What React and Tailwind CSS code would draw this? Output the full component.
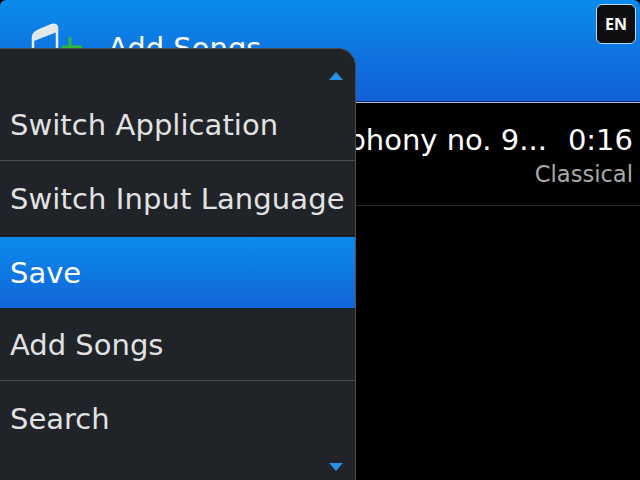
const font = { fontFamily: "'DejaVu Sans', sans-serif" };

const Arrow = ({ down, className }) => (
  <svg width="14" height="8" viewBox="0 0 14 8" className={className}>
    <path d={down ? "M0 0H14L7 8Z" : "M7 0L14 8H0Z"} fill="#2a8fe6" />
  </svg>
);

const Menu = () => (
  <div className="absolute left-0 top-[48px] w-[356px] h-[432px] bg-[#202328] border-t border-r border-[#4a4d52] rounded-tr-[18px] overflow-hidden">
    <div className="h-[39px] flex items-end justify-end pr-[12px] pb-[8px]">
      <Arrow />
    </div>
    <div className="h-[73px] flex items-center pl-[10px] pt-[3px] border-b border-[#4a4d52] text-[#e2e2e2] text-[29px] tracking-[0.06px]">
      Switch Application
    </div>
    <div className="h-[75px] flex items-center pl-[10px] pt-[3px] border-b border-[#14171b] text-[#e2e2e2] text-[29px] tracking-[0.1px] whitespace-nowrap">
      Switch Input Language
    </div>
    <div className="h-[71px] mt-[1px] flex items-center pl-[10px] pt-[3px] text-white text-[29px] bg-gradient-to-b from-[#0a8bec] to-[#1265d8]">
      Save
    </div>
    <div className="h-[73px] flex items-center pl-[10px] pt-[3px] border-b border-[#4a4d52] text-[#e2e2e2] text-[29px]">
      Add Songs
    </div>
    <div className="h-[76px] flex items-center pl-[10px] pt-[1px] text-[#e2e2e2] text-[29px]">
      Search
    </div>
    <Arrow down className="absolute right-[12px] bottom-[9px]" />
  </div>
);

export default function App() {
  return (
    <div className="relative w-[640px] h-[480px] overflow-hidden bg-black" style={font}>
      <header className="h-[102px] rounded-t-[6px] bg-gradient-to-b from-[#0a8bec] to-[#1360d6] border-b border-[#0b2f78] flex items-start relative">
        <div className="pl-[30px] pt-[23px] flex items-start">
          <svg width="54" height="40" viewBox="0 0 54 40">
            <path d="M3 40V15Q3 10 8 8L22 2Q27 1 27 5V40" fill="none" stroke="#e8eef5" strokeWidth="2.5" />
            <path d="M3 18V15Q3 10 8 8L22 2Q27 1 27 5V9L4 18Z" fill="#e4e7ec" />
            <path d="M40 14V32M32 24H52" stroke="#34b53a" strokeWidth="3" />
          </svg>
          <span className="ml-[24px] mt-[1px] text-white text-[29px] leading-[48px]">Add Songs</span>
        </div>
        <div className="absolute right-[4px] top-[4px] w-[40px] h-[40px] rounded-[6px] bg-[#0e0e10] border border-[#b8d8f0] flex items-center justify-center text-white text-[16px] font-bold" style={{ fontFamily: "'Open Sans', sans-serif" }}>
          EN
        </div>
      </header>
      <div className="h-[1px] bg-[#b4b8bc]" />
      <div className="h-[103px] border-b border-[#2a2a2a] pr-[7px] flex flex-col items-end">
        <div className="pt-[17px] text-white text-[29px] leading-[40px] whitespace-nowrap">
          Symphony no. 9...<span className="ml-[21px]">0:16</span>
        </div>
        <div className="text-[#a8a8a8] text-[22.6px] leading-[30px] -mt-[1px]">Classical</div>
      </div>
      <Menu />
    </div>
  );
}
